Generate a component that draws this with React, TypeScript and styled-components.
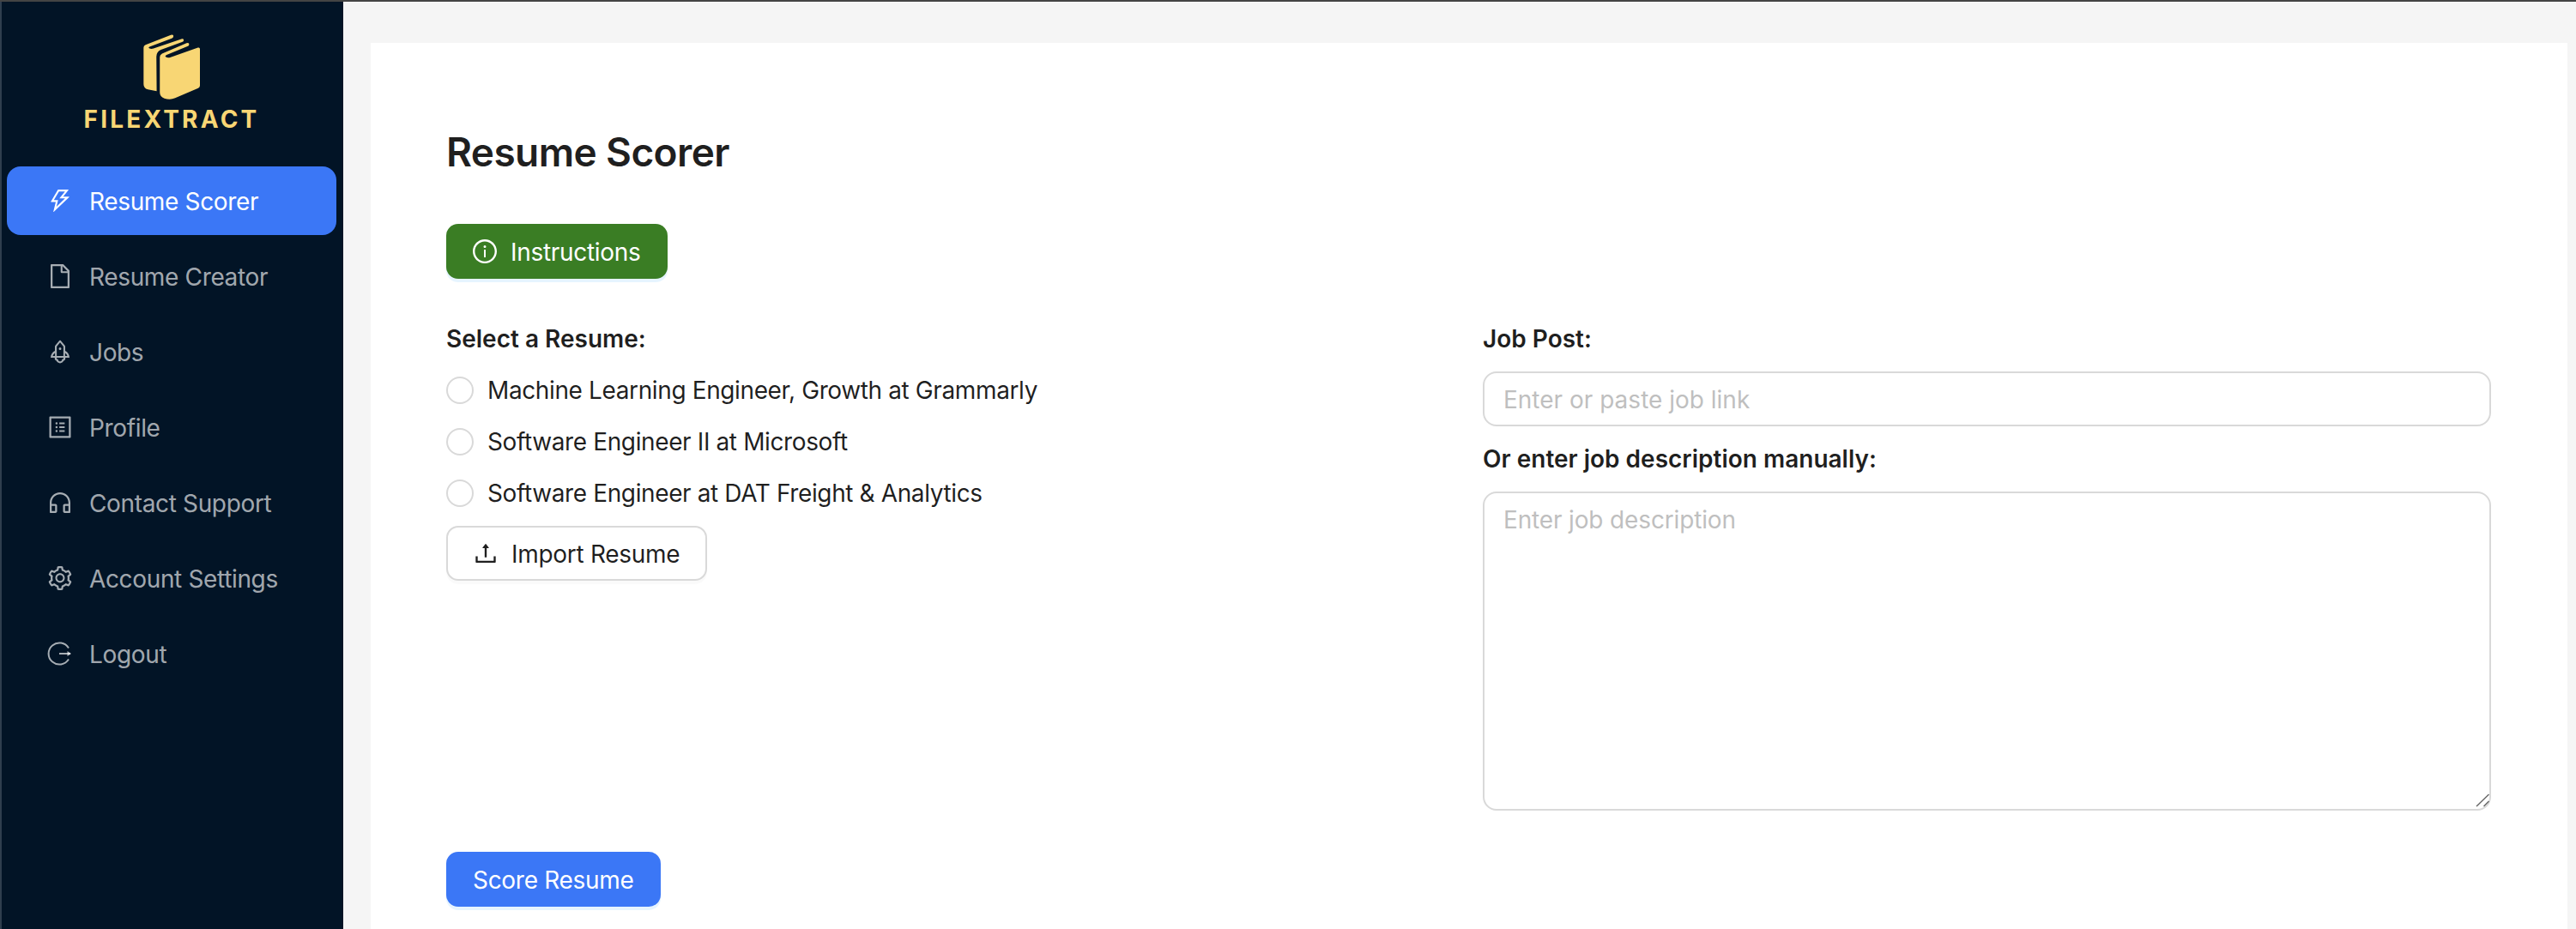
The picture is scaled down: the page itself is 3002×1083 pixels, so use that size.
import React from 'react';
import styled, { createGlobalStyle } from 'styled-components';
import {
  AiOutlineThunderbolt,
  AiOutlineFile,
  AiOutlineRocket,
  AiOutlineProfile,
  AiOutlineCustomerService,
  AiOutlineSetting,
  AiOutlineInfoCircle,
  AiOutlineUpload
} from 'react-icons/ai';

const GlobalStyle = createGlobalStyle`
  html, body {
    margin: 0;
    padding: 0;
    height: 100%;
    overflow: hidden;
    background: #f5f5f5;
  }
  * {
    box-sizing: border-box;
  }
  body {
    font-family: Inter, "Liberation Sans", sans-serif;
  }
`;

const Shell = styled.div`
  display: flex;
  height: 1083px;
  border-top: 2px solid #444;
  overflow: hidden;
`;

const Sidebar = styled.aside`
  flex: 0 0 400px;
  background: #021426;
  border-left: 2px solid #2f3e4e;
  padding: 0 8px 0 6px;
`;

const Brand = styled.div`
  height: 192px;
  padding-top: 37px;
  display: flex;
  flex-direction: column;
  align-items: center;
`;

const BrandName = styled.div`
  margin-top: 5px;
  font-size: 28px;
  line-height: 34px;
  font-weight: 700;
  letter-spacing: 3.2px;
  color: #f8d674;
`;

const Menu = styled.nav`
  display: flex;
  flex-direction: column;
  gap: 8px;
`;

const MenuItem = styled.div<{ $active?: boolean }>`
  height: 80px;
  display: flex;
  align-items: center;
  gap: 18px;
  padding: 2px 0 0 46px;
  border-radius: 16px;
  font-size: 28px;
  letter-spacing: -0.35px;
  color: ${p => (p.$active ? '#fff' : 'rgba(255, 255, 255, 0.65)')};
  background: ${p => (p.$active ? '#3b77f6' : 'transparent')};
  svg {
    flex: none;
    width: 32px;
    height: 32px;
    margin-top: -2px;
  }
`;

const Main = styled.main`
  flex: 1;
  padding: 48px 10px 0 32px;
`;

const Card = styled.section`
  height: 100%;
  background: #fff;
  padding: 95px 89px 0 88px;
`;

const Title = styled.h1`
  margin: 0 0 52px;
  font-size: 46px;
  line-height: 64px;
  font-weight: 600;
  letter-spacing: -0.6px;
  color: rgba(0, 0, 0, 0.88);
`;

const Button = styled.button<{ $variant: 'green' | 'blue' | 'plain' }>`
  height: 64px;
  display: inline-flex;
  align-items: center;
  gap: 14px;
  padding: 2px ${p => (p.$variant === 'plain' ? 30 : 31)}px 0;
  border-radius: 14px;
  font-family: inherit;
  font-size: 28px;
  letter-spacing: -0.3px;
  border: ${p => (p.$variant === 'plain' ? '2px solid #d9d9d9' : 'none')};
  background: ${p =>
    p.$variant === 'green' ? '#3a7d24' : p.$variant === 'blue' ? '#3b77f6' : '#fff'};
  color: ${p => (p.$variant === 'plain' ? 'rgba(0, 0, 0, 0.88)' : '#fff')};
  box-shadow: 0 4px 0
    ${p => (p.$variant === 'plain' ? 'rgba(0, 0, 0, 0.02)' : 'rgba(5, 145, 255, 0.1)')};
  svg {
    width: 32px;
    height: 32px;
    margin: -2px 0 0 -2px;
  }
`;

const Columns = styled.div`
  display: grid;
  grid-template-columns: 1175px 1175px;
  column-gap: 33px;
  margin: 50px 0 48px;
`;

const Column = styled.div`
  display: flex;
  flex-direction: column;
  align-items: flex-start;
`;

const FieldLabel = styled.label`
  display: block;
  font-size: 28px;
  line-height: 40px;
  font-weight: 600;
  color: rgba(0, 0, 0, 0.88);
`;

const ResumeList = styled.div`
  margin: 10px 0 8px;
`;

const ResumeOption = styled.div`
  height: 60px;
  display: flex;
  align-items: center;
  gap: 16px;
  font-size: 28px;
  letter-spacing: -0.38px;
  color: rgba(0, 0, 0, 0.88);
`;

const RadioDot = styled.span`
  width: 32px;
  height: 32px;
  border-radius: 50%;
  border: 2px solid #d9d9d9;
  background: #fff;
`;

const TextInput = styled.input`
  display: block;
  width: 100%;
  height: 64px;
  margin: 18px 0;
  padding: 2px 22px 0;
  border: 2px solid #d9d9d9;
  border-radius: 16px;
  outline: none;
  font-family: inherit;
  font-size: 28px;
  &::placeholder {
    color: #bfbfbf;
  }
`;

const TextAreaBox = styled.div`
  position: relative;
  width: 100%;
  margin-top: 18px;
`;

const TextArea = styled.textarea`
  display: block;
  width: 100%;
  height: 372px;
  padding: 11px 22px;
  border: 2px solid #d9d9d9;
  border-radius: 16px;
  outline: none;
  resize: none;
  font-family: inherit;
  font-size: 28px;
  line-height: 40px;
  letter-spacing: -0.15px;
  &::placeholder {
    color: #bfbfbf;
  }
`;

const ResizeGrip = styled.svg`
  position: absolute;
  right: 2px;
  bottom: 4px;
  width: 16px;
  height: 16px;
`;

const BookLogo = () => (
  <svg width="67" height="78" viewBox="500 115 202 235" fill="#f8d674">
    <path d="M501 165Q501 158 508 155L597 120Q606 117 606 124Q606 130 600 132L522 162Q516 165 522 168Q528 171 536 168L636 134Q643 133 642 139Q642 143 636 145L562 172Q546 179 546 196L547 318L516 312Q501 308 501 293Z" />
    <path d="M558 198Q558 190 566 186L652 149Q661 146 661 153Q661 158 655 160L582 190Q574 194 580 198Q586 202 594 199L692 165Q699 163 699 170L699 298Q699 304 693 307L612 342Q594 350 574 343Q558 337 558 322Z" />
  </svg>
);

const LogoutIcon = () => (
  <svg viewBox="-2 -2 32 32" fill="none" stroke="currentColor" strokeWidth="2">
    <path d="M24 7.5A12.6 12.6 0 1 0 24 20.5" />
    <path d="M13 14H26" />
    <path d="M22.5 11L27 14L22.5 17Z" fill="currentColor" stroke="none" />
  </svg>
);

const menu = [
  { label: 'Resume Scorer', icon: <AiOutlineThunderbolt />, active: true },
  { label: 'Resume Creator', icon: <AiOutlineFile /> },
  { label: 'Jobs', icon: <AiOutlineRocket /> },
  { label: 'Profile', icon: <AiOutlineProfile /> },
  { label: 'Contact Support', icon: <AiOutlineCustomerService /> },
  { label: 'Account Settings', icon: <AiOutlineSetting /> },
  { label: 'Logout', icon: <LogoutIcon /> }
];

const resumes = [
  'Machine Learning Engineer, Growth at Grammarly',
  'Software Engineer II at Microsoft',
  'Software Engineer at DAT Freight & Analytics'
];

const App: React.FC = () => (
  <Shell>
    <GlobalStyle />
    <Sidebar>
      <Brand>
        <BookLogo />
        <BrandName>FILEXTRACT</BrandName>
      </Brand>
      <Menu>
        {menu.map(item => (
          <MenuItem key={item.label} $active={item.active}>
            {item.icon}
            {item.label}
          </MenuItem>
        ))}
      </Menu>
    </Sidebar>
    <Main>
      <Card>
        <Title>Resume Scorer</Title>
        <Button $variant="green">
          <AiOutlineInfoCircle />
          Instructions
        </Button>
        <Columns>
          <Column>
            <FieldLabel>Select a Resume:</FieldLabel>
            <ResumeList>
              {resumes.map(resume => (
                <ResumeOption key={resume}>
                  <RadioDot />
                  {resume}
                </ResumeOption>
              ))}
            </ResumeList>
            <Button $variant="plain">
              <AiOutlineUpload />
              Import Resume
            </Button>
          </Column>
          <Column>
            <FieldLabel>Job Post:</FieldLabel>
            <TextInput placeholder="Enter or paste job link" />
            <FieldLabel>Or enter job description manually:</FieldLabel>
            <TextAreaBox>
              <TextArea placeholder="Enter job description" />
              <ResizeGrip viewBox="0 0 16 16" stroke="#666" strokeWidth="1.4">
                <path d="M1 15L15.5 1" />
                <path d="M9.5 15L15.5 9" />
              </ResizeGrip>
            </TextAreaBox>
          </Column>
        </Columns>
        <Button $variant="blue">Score Resume</Button>
      </Card>
    </Main>
  </Shell>
);

export default App;
